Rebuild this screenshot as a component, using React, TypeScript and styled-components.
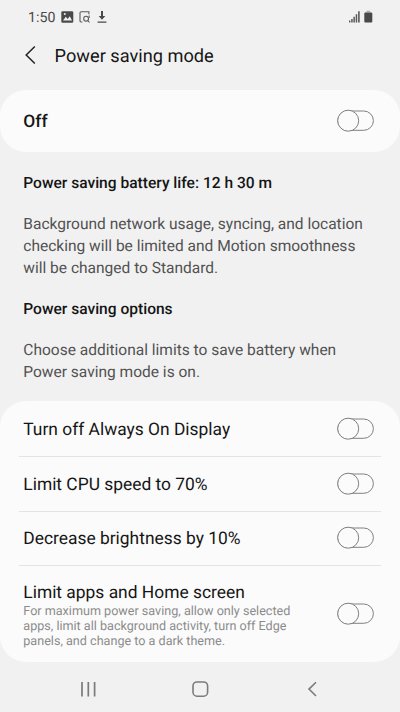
import React from "react";
import styled, { createGlobalStyle } from "styled-components";

const GlobalStyle = createGlobalStyle`
  * { box-sizing: border-box; }
  body { margin: 0; background: #f1f1f1; font-family: Roboto, "Liberation Sans", sans-serif; text-rendering: geometricPrecision; }
  h1, h2, p { margin: 0; }
  svg { display: block; }
`;

const Screen = styled.main`
  width: 400px;
  height: 712px;
  display: flex;
  flex-direction: column;
  overflow: hidden;
  background: #f1f1f1;
  color: #151515;
`;

const StatusBar = styled.div`
  height: 34px;
  display: flex;
  justify-content: space-between;
  padding: 8px 27px 0 28px;
  color: #4a4a4a;
`;

const StatusGroup = styled.div`
  display: flex;
  align-items: flex-start;
`;

const Clock = styled.span`
  width: 33px;
  font-size: 14.2px;
  line-height: 21px;
`;

const Header = styled.header`
  height: 56px;
  display: flex;
  align-items: flex-start;
  padding: 10px 0 0 24px;
`;

const Title = styled.h1`
  margin-left: 17.6px;
  font-size: 18.2px;
  line-height: 26px;
  font-weight: 400;
`;

const IconButton = styled.button`
  display: block;
  padding: 0;
  border: 0;
  background: none;
  color: inherit;
`;

const Card = styled.section`
  background: #fbfbfb;
  border-radius: 26px;
`;

const Row = styled.div<{ $height: number; $divided?: boolean }>`
  height: ${(p) => p.$height}px;
  display: flex;
  align-items: center;
  justify-content: space-between;
  margin: 0 19px;
  padding: 0 7px 0 4.3px;
  border-bottom: ${(p) => (p.$divided ? "1px solid #e3e3e3" : "0")};
`;

const Label = styled.div<{ $strong?: boolean }>`
  padding-top: 2px;
  font-size: 17.4px;
  line-height: 22px;
  font-weight: ${(p) => (p.$strong ? 500 : 400)};
`;

const OptionText = styled.div`
  padding-top: 2px;
`;

const Note = styled.p`
  margin-top: 1px;
  font-size: 12.6px;
  line-height: 14.8px;
  color: #8b8b8b;
  white-space: pre-line;
`;

const Info = styled.section`
  height: 249px;
  padding: 20px 23.3px 0;
`;

const Heading = styled.h2`
  font-size: 15.56px;
  line-height: 22px;
  font-weight: 500;
`;

const Body = styled.p`
  margin: 19px 0 18.4px;
  font-size: 15.53px;
  line-height: 22.2px;
  color: #525252;
  white-space: pre-line;
`;

const NavBar = styled.nav`
  flex: 1;
  display: grid;
  grid-template-columns: repeat(3, 112px);
  justify-content: center;
  justify-items: center;
  align-items: start;
  padding-top: 16px;
  color: #7b7b7b;
`;

const Toggle = () => (
  <svg width="38" height="24" viewBox="0 0 38 24" fill="none" stroke="#808080" strokeWidth="1" role="switch" aria-checked={false}>
    <rect x="1.8" y="2" width="35.6" height="19.3" rx="9.65" />
    <circle cx="12.2" cy="11.7" r="10.5" fill="#fbfbfb" />
  </svg>
);

const PictureIcon = () => (
  <svg width="13" height="18" viewBox="0 0 13 18">
    <rect x="0.3" y="3.2" width="12" height="11.6" rx="1.4" fill="#4a4a4a" />
    <path d="M2 12.4 4.8 8.8 6.7 11 8.8 8.2 11 12.4Z" fill="#f1f1f1" />
    <circle cx="3.8" cy="6.1" r="1" fill="#f1f1f1" />
  </svg>
);

const SearchPageIcon = () => (
  <svg width="13" height="18" viewBox="0 0 13 18" fill="none" stroke="#5a5a5a" strokeWidth="1.1">
    <path d="M3.4 14H2.2Q1 14 1 12.8V4.8Q1 3.7 2.2 3.7H9.9V6.2" />
    <circle cx="7.1" cy="10.7" r="2.4" />
    <path d="m8.8 12.5 1.7 2M10.2 7.5v2.2" />
  </svg>
);

const DownloadIcon = () => (
  <svg width="10" height="18" viewBox="0 0 10 18" fill="#4a4a4a">
    <path d="M4 3h2v5h2.3L5 11.8 1.7 8H4ZM.6 13.6h8.8v1.2H.6Z" />
  </svg>
);

const SignalIcon = () => (
  <svg width="12" height="18" viewBox="0 0 12 18" fill="#5a5a5a">
    <path d="M0 12.6h1.4v1.8H0ZM2.2 10.9h1.5v3.5H2.2ZM4.4 8.8h1.5v5.6H4.4ZM6.7 6.2h1.5v8.2H6.7ZM9.1 3.3h1.6v11.1H9.1Z" />
  </svg>
);

const BatteryIcon = () => (
  <svg width="9" height="18" viewBox="0 0 9 18">
    <path d="M2.5 2.8h3.6v1.3h1.4V5H.9v-.9h1.6Z" fill="#aaa" />
    <path d="M.3 5.6Q.3 4.7 1.2 4.7h6.2q.9 0 .9.9v8q0 .9-.9.9H1.2q-.9 0-.9-.9Z" fill="#494949" />
  </svg>
);

const Gap = styled.span<{ $w: number }>`
  width: ${(p) => p.$w}px;
`;

const options = ["Turn off Always On Display", "Limit CPU speed to 70%", "Decrease brightness by 10%"];

export default function App() {
  return (
    <Screen>
      <GlobalStyle />
      <StatusBar>
        <StatusGroup>
          <Clock>1:50</Clock>
          <PictureIcon />
          <Gap $w={5} />
          <SearchPageIcon />
          <Gap $w={5} />
          <DownloadIcon />
        </StatusGroup>
        <StatusGroup>
          <SignalIcon />
          <Gap $w={3} />
          <BatteryIcon />
        </StatusGroup>
      </StatusBar>
      <Header>
        <IconButton aria-label="Navigate up">
          <svg width="13" height="22" viewBox="0 0 13 22" fill="none" stroke="#222" strokeWidth="1.5">
            <path d="M10.8 2.5 2.2 11l8.6 8.5" />
          </svg>
        </IconButton>
        <Title>Power saving mode</Title>
      </Header>
      <Card>
        <Row $height={62}>
          <Label $strong>Off</Label>
          <Toggle />
        </Row>
      </Card>
      <Info>
        <Heading>Power saving battery life: 12 h 30 m</Heading>
        <Body>{"Background network usage, syncing, and location\nchecking will be limited and Motion smoothness\nwill be changed to Standard."}</Body>
        <Heading>Power saving options</Heading>
        <Body>{"Choose additional limits to save battery when\nPower saving mode is on."}</Body>
      </Info>
      <Card>
        {options.map((text, i) => (
          <Row key={text} $height={i === 0 ? 56 : 54.5} $divided>
            <Label>{text}</Label>
            <Toggle />
          </Row>
        ))}
        <Row $height={96}>
          <OptionText>
            <Label>Limit apps and Home screen</Label>
            <Note>{"For maximum power saving, allow only selected\napps, limit all background activity, turn off Edge\npanels, and change to a dark theme."}</Note>
          </OptionText>
          <Toggle />
        </Row>
      </Card>
      <NavBar>
        <IconButton aria-label="Recents">
          <svg width="18" height="22" viewBox="0 0 18 22" stroke="currentColor" strokeWidth="1.7">
            <path d="M3 4v14.4M9.3 4v14.4M15.6 4v14.4" />
          </svg>
        </IconButton>
        <IconButton aria-label="Home">
          <svg width="18" height="22" viewBox="0 0 18 22" fill="none" stroke="currentColor" strokeWidth="1.6">
            <rect x="2" y="4" width="14.6" height="14.2" rx="4" />
          </svg>
        </IconButton>
        <IconButton aria-label="Back">
          <svg width="18" height="22" viewBox="0 0 18 22" fill="none" stroke="currentColor" strokeWidth="1.6">
            <path d="m13 4.2-7 6.9 7 6.9" />
          </svg>
        </IconButton>
      </NavBar>
    </Screen>
  );
}
